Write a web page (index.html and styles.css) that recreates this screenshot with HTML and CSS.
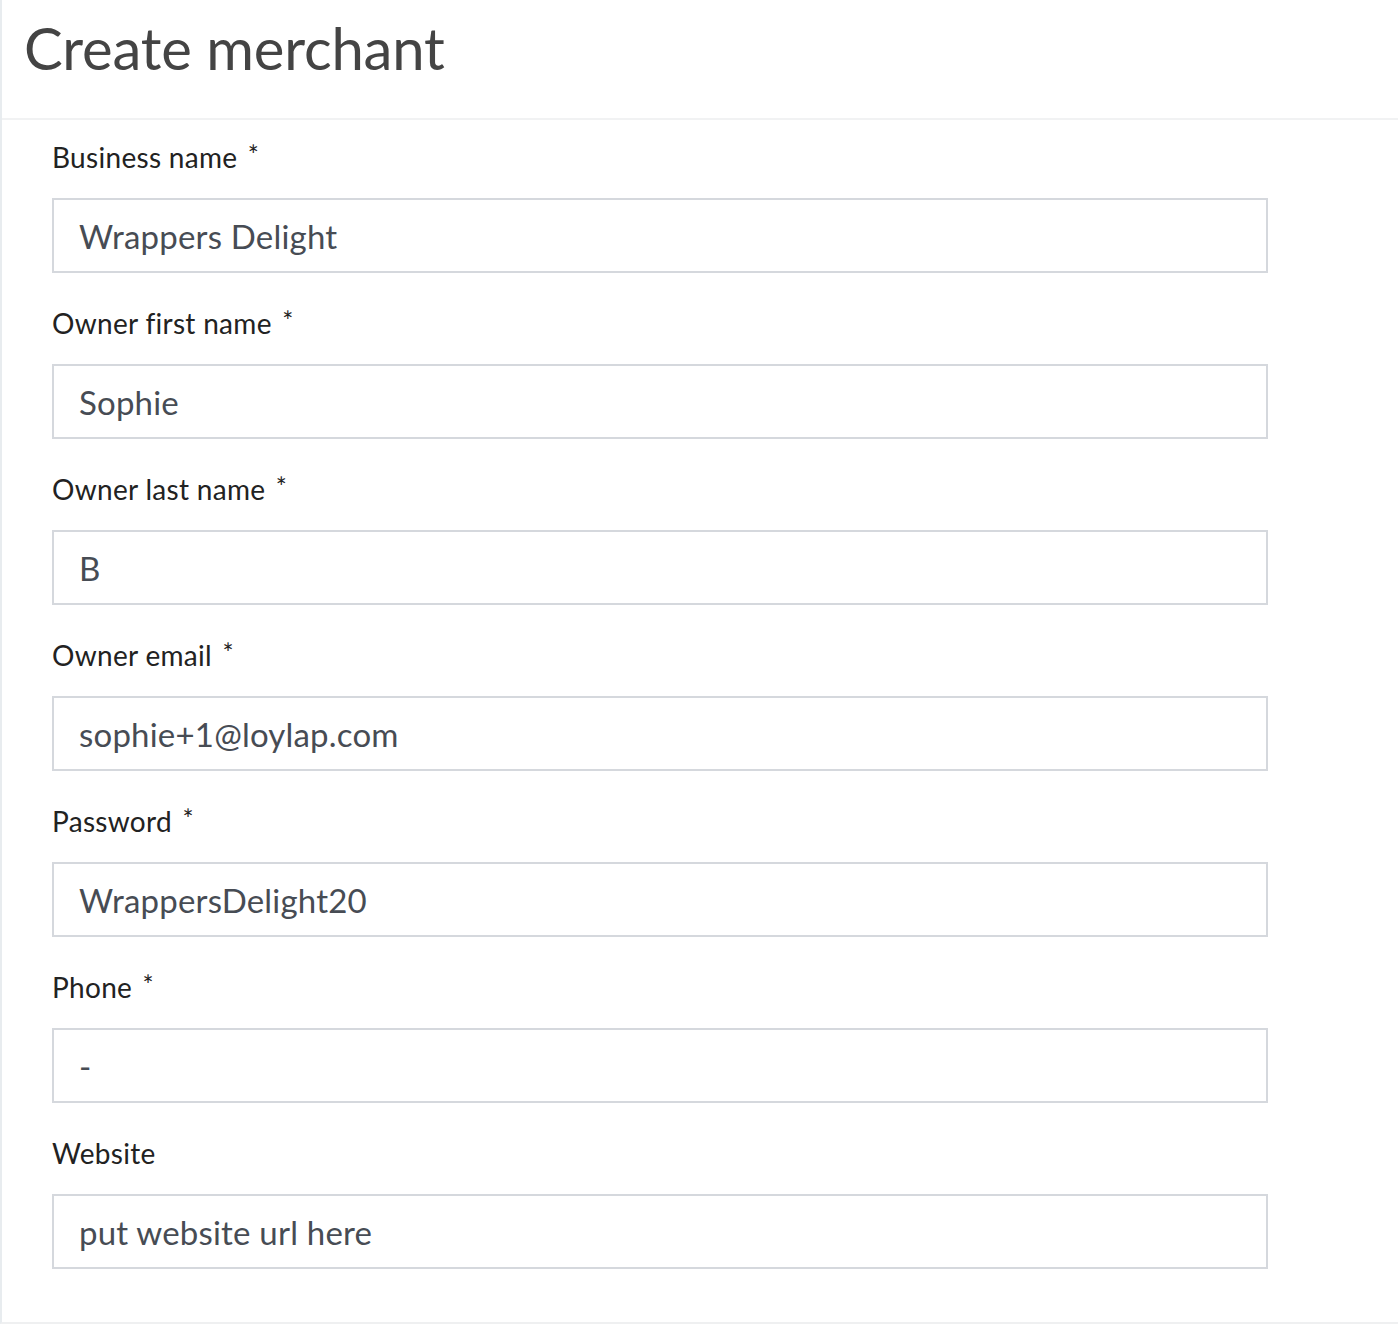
FILE: index.html
```html
<!DOCTYPE html>
<html lang="en">
<head>
    <meta charset="UTF-8">
    <meta name="viewport" content="width=device-width, initial-scale=1.0">
    <title>Create merchant</title>
    <link rel="stylesheet" href="styles.css">
</head>
<body>
    <div class="panel">
        <div class="panel-header">
            <h1>Create merchant</h1>
        </div>

        <form class="merchant-form">
            <div class="field">
                <label for="business_name">Business name <span class="req">*</span></label>
                <input type="text" id="business_name" value="Wrappers Delight">
            </div>
            <div class="field">
                <label for="first_name">Owner first name <span class="req">*</span></label>
                <input type="text" id="first_name" value="Sophie">
            </div>
            <div class="field">
                <label for="last_name">Owner last name <span class="req">*</span></label>
                <input type="text" id="last_name" value="B">
            </div>
            <div class="field">
                <label for="email">Owner email <span class="req">*</span></label>
                <input type="text" id="email" value="sophie+1@loylap.com">
            </div>
            <div class="field">
                <label for="password">Password <span class="req">*</span></label>
                <input type="text" id="password" value="WrappersDelight20">
            </div>
            <div class="field">
                <label for="phone">Phone <span class="req">*</span></label>
                <input type="text" id="phone" value="-">
            </div>
            <div class="field">
                <label for="website">Website</label>
                <input type="text" id="website" value="put website url here">
            </div>
        </form>
    </div>
</body>
</html>
```

FILE: styles.css
```css
body {
    margin: 0;
    font-family: Lato, "Open Sans", Arial, sans-serif;
    background: #fff;
}
.panel {
    border-left: 2px solid #e8ecef;
    border-bottom: 2px solid #eff0f1;
    width: 1396px;
}
.panel-header {
    height: 118px;
    border-bottom: 2px solid #f1f2f3;
    padding-left: 22px;
}
h1 {
    margin: 0;
    padding-top: 13px;
    font-size: 58px;
    line-height: 70px;
    font-weight: 400;
    letter-spacing: -0.2px;
    color: #444;
}
.merchant-form {
    padding: 19px 0 21px 50px;
}
.field {
    margin-bottom: 32px;
}
label {
    display: block;
    font-size: 28px;
    line-height: 36px;
    letter-spacing: 0.3px;
    margin-bottom: 23px;
    color: #222;
}
.req {
    margin-left: 3px;
    font-size: 26px;
    line-height: 20px;
    vertical-align: 3px;
}
input {
    display: block;
    box-sizing: border-box;
    width: 1216px;
    height: 75px;
    border: 2px solid #d5d8dd;
    padding: 0 25px;
    font-family: inherit;
    font-size: 33px;
    letter-spacing: 0.2px;
    color: #474c54;
    background: #fff;
    outline: none;
}
```
